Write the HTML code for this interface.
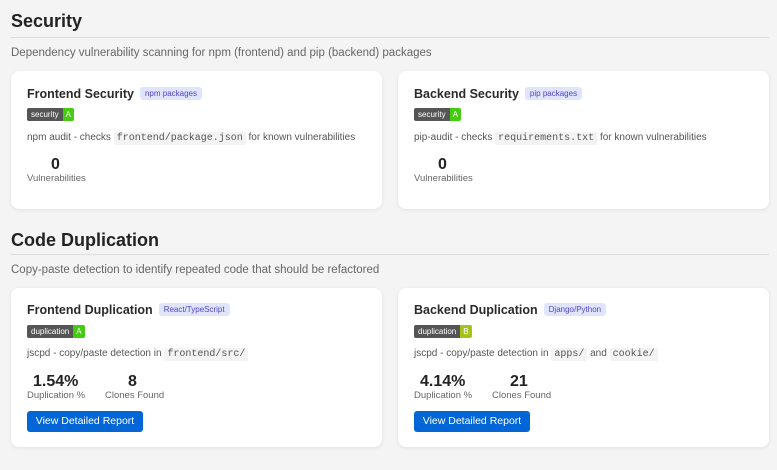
<!DOCTYPE html>
<html><head><meta charset="utf-8"><style>
*{margin:0;padding:0;box-sizing:border-box}
body{width:777px;height:470px;background:#f4f4f5;font-family:"Liberation Sans","DejaVu Sans",sans-serif;color:#333;position:relative;overflow:hidden}
.h{position:absolute;left:11px;font-size:18px;font-weight:bold;color:#222}
.hr{position:absolute;left:11px;right:8px;height:1px;background:#ddd}
.d{position:absolute;left:11px;font-size:11.5px;color:#666}
.card{position:absolute;width:371px;background:#fff;border-radius:8px;box-shadow:0 1px 4px rgba(0,0,0,.08);padding:0 16px}
.t{position:absolute;left:16px;font-size:12.5px;font-weight:bold;color:#2a2a2a;white-space:nowrap}
.tag{display:inline-block;margin-left:6px;background:#e0e5fb;color:#5046c9;font-size:8px;font-weight:normal;padding:2px 5px;border-radius:3px;vertical-align:2px}
.b{position:absolute;left:16px;height:13px;font-size:8px;display:flex;border-radius:2px;overflow:hidden;line-height:13px}
.b span:first-child{background:#555;color:#fff;padding:0 4px}
.b span:last-child{background:#4c1;color:#fff;padding:0 3px}
.p{position:absolute;left:16px;font-size:10px;color:#555;white-space:nowrap}
code{font-family:"Liberation Mono",monospace;background:#f3f3f3;padding:1px 3px;font-size:10px;border-radius:2px}
.n{position:absolute;font-size:16px;font-weight:bold;color:#222;text-align:center}
.l{position:absolute;font-size:9.5px;color:#666}
.btn{position:absolute;left:16px;width:116px;height:21px;background:#0366d6;color:#fff;font-size:10.5px;border-radius:3px;text-align:center;line-height:21px}
</style></head><body>
<div class="h" style="top:11px">Security</div>
<div class="hr" style="top:37px"></div>
<div class="d" style="top:47px">Dependency vulnerability scanning for npm (frontend) and pip (backend) packages</div>

<div class="card" style="left:11px;top:71px;height:138px">
<div class="t" style="top:16px">Frontend Security<span class="tag">npm packages</span></div>
<div class="b" style="top:37px"><span>security</span><span>A</span></div>
<div class="p" style="top:61px">npm audit - checks <code>frontend/package.json</code> for known vulnerabilities</div>
<div class="n" style="left:40px;top:85px">0</div>
<div class="l" style="left:16px;top:102px">Vulnerabilities</div>
</div>
<div class="card" style="left:398px;top:71px;height:138px">
<div class="t" style="top:16px">Backend Security<span class="tag">pip packages</span></div>
<div class="b" style="top:37px"><span>security</span><span>A</span></div>
<div class="p" style="top:61px">pip-audit - checks <code>requirements.txt</code> for known vulnerabilities</div>
<div class="n" style="left:40px;top:85px">0</div>
<div class="l" style="left:16px;top:102px">Vulnerabilities</div>
</div>

<div class="h" style="top:230px">Code Duplication</div>
<div class="hr" style="top:254px"></div>
<div class="d" style="top:264px">Copy-paste detection to identify repeated code that should be refactored</div>

<div class="card" style="left:11px;top:288px;height:159px">
<div class="t" style="top:15px">Frontend Duplication<span class="tag">React/TypeScript</span></div>
<div class="b" style="top:37px"><span>duplication</span><span>A</span></div>
<div class="p" style="top:60px">jscpd - copy/paste detection in <code>frontend/src/</code></div>
<div class="n" style="left:22px;top:85px">1.54%</div>
<div class="l" style="left:16px;top:102px">Duplication %</div>
<div class="n" style="left:117px;top:85px">8</div>
<div class="l" style="left:94px;top:102px">Clones Found</div>
<div class="btn" style="top:123px">View Detailed Report</div>
</div>
<div class="card" style="left:398px;top:288px;height:159px">
<div class="t" style="top:15px">Backend Duplication<span class="tag">Django/Python</span></div>
<div class="b" style="top:37px"><span>duplication</span><span style="background:#a4c41c">B</span></div>
<div class="p" style="top:60px">jscpd - copy/paste detection in <code>apps/</code> and <code>cookie/</code></div>
<div class="n" style="left:22px;top:85px">4.14%</div>
<div class="l" style="left:16px;top:102px">Duplication %</div>
<div class="n" style="left:112px;top:85px">21</div>
<div class="l" style="left:94px;top:102px">Clones Found</div>
<div class="btn" style="top:123px">View Detailed Report</div>
</div>
</body></html>
